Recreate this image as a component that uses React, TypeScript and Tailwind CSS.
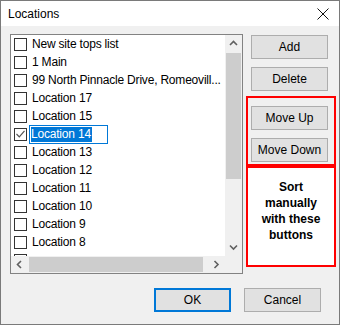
import React from "react";

const items = [
  { label: "New site tops list" },
  { label: "1 Main" },
  { label: "99 North Pinnacle Drive, Romeovill..." },
  { label: "Location 17" },
  { label: "Location 15" },
  { label: "Location 14", checked: true, editing: true },
  { label: "Location 13" },
  { label: "Location 12" },
  { label: "Location 11" },
  { label: "Location 10" },
  { label: "Location 9" },
  { label: "Location 8" },
  { label: "" },
];

const font = { fontFamily: '"Segoe UI", "Liberation Sans", Arial, sans-serif' };

function Chevron({ dir }: { dir: "up" | "down" | "left" | "right" }) {
  const d = {
    up: "M1 5 L4.5 1.5 L8 5",
    down: "M1 1.5 L4.5 5 L8 1.5",
    left: "M5 1 L1.5 4.5 L5 8",
    right: "M1.5 1 L5 4.5 L1.5 8",
  }[dir];
  const vertical = dir === "up" || dir === "down";
  return (
    <svg width={vertical ? 9 : 7} height={vertical ? 7 : 9} viewBox={vertical ? "0 0 9 7" : "0 0 7 9"}>
      <path d={d} fill="none" stroke="#606060" strokeWidth="1.6" />
    </svg>
  );
}

function Btn({ children, primary }: { children: React.ReactNode; primary?: boolean }) {
  return (
    <div
      className={`flex w-[77px] h-[24px] items-center justify-center bg-[#e1e1e1] text-[12px] text-black ${
        primary ? "border-2 border-[#0078d7]" : "border border-[#adadad]"
      }`}
    >
      {children}
    </div>
  );
}

export default function App() {
  return (
    <div className="w-[340px] h-[325px] border border-[#7a7a7a] bg-[#f0f0f0] flex flex-col" style={font}>
      {/* title bar */}
      <div className="h-[25px] bg-white flex items-center justify-between pl-[7px] pr-[10px] shrink-0">
        <span className="text-[12px] text-black">Locations</span>
        <svg width="12" height="12" viewBox="0 0 12 12">
          <path d="M0.5 0.5 L11.5 11.5 M11.5 0.5 L0.5 11.5" stroke="#111" strokeWidth="1" />
        </svg>
      </div>

      <div className="flex pt-[8px] pl-[9px] gap-[3px]">
        {/* list box */}
        <div className="w-[233px] h-[240px] border border-[#828282] bg-white grid grid-cols-[214px_17px] grid-rows-[221px_17px]">
          <div className="overflow-hidden">
            {items.map((it, i) => (
              <div
                key={i}
                className="h-[18px] flex items-center pl-[3px] text-[12px] tracking-[-0.2px] text-black whitespace-nowrap"
              >
                <div className="w-[13px] h-[13px] border border-[#333] bg-white shrink-0 flex items-center justify-center">
                  {it.checked && (
                    <svg width="9" height="8" viewBox="0 0 9 8">
                      <path d="M0.5 4 L3.3 6.8 L8.5 0.8" fill="none" stroke="#555" strokeWidth="1.2" />
                    </svg>
                  )}
                </div>
                {it.editing ? (
                  <div className="ml-[2px] w-[79px] h-[19px] border border-[#0078d7] flex items-center pl-[1px]">
                    <span className="bg-[#0078d7] text-white leading-[15px] pr-[1px]">{it.label}</span>
                  </div>
                ) : (
                  <span className="ml-[5px]">{it.label}</span>
                )}
              </div>
            ))}
          </div>
          {/* vertical scrollbar */}
          <div className="bg-[#f0f0f0] flex flex-col">
            <div className="h-[17px] flex items-center justify-center">
              <Chevron dir="up" />
            </div>
            <div className="flex-1">
              <div className="h-[126px] mx-[1px] mt-[1px] bg-[#cdcdcd]" />
            </div>
            <div className="h-[17px] flex items-center justify-center">
              <Chevron dir="down" />
            </div>
          </div>
          {/* horizontal scrollbar */}
          <div className="bg-[#f0f0f0] flex">
            <div className="w-[17px] flex items-center justify-center">
              <Chevron dir="left" />
            </div>
            <div className="flex-1 flex items-center">
              <div className="w-[174px] h-[15px] ml-[1px] bg-[#cdcdcd]" />
            </div>
            <div className="w-[17px] flex items-center justify-center">
              <Chevron dir="right" />
            </div>
          </div>
          <div className="bg-[#f0f0f0]" />
        </div>

        {/* buttons column */}
        <div className="w-[90px] flex flex-col">
          <div className="ml-[5px] mt-[1px]">
            <Btn>Add</Btn>
          </div>
          <div className="ml-[5px] mt-[8px]">
            <Btn>Delete</Btn>
          </div>
          <div className="mt-[5px] h-[70px] border-2 border-[#ff0000] pt-[8px] pl-[3px] flex flex-col gap-[8px]">
            <Btn>Move Up</Btn>
            <Btn>Move Down</Btn>
          </div>
          <div
            className="h-[101px] border-2 border-[#ff0000] bg-white pt-[11px] text-center text-[12px] font-bold leading-[16px] text-black"
            style={{ fontFamily: '"Liberation Sans", Arial, sans-serif' }}
          >
            Sort
            <br />
            manually
            <br />
            with these
            <br />
            buttons
          </div>
        </div>
      </div>

      {/* bottom buttons */}
      <div className="flex justify-end gap-[13px] pr-[18px] mt-[14px]">
        <Btn primary>OK</Btn>
        <Btn>Cancel</Btn>
      </div>
    </div>
  );
}
